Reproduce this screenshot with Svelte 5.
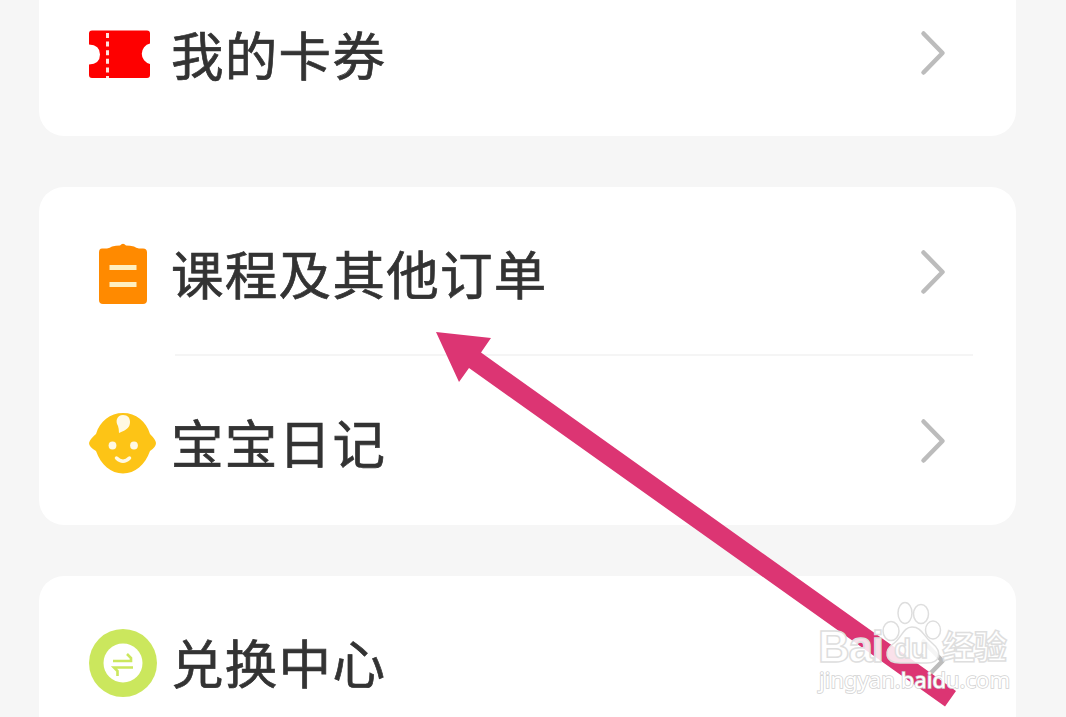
<script lang="ts">
  type IconName = 'ticket' | 'order' | 'baby' | 'exchange';

  interface Item {
    icon: IconName;
    label: string;
  }

  const groups: Item[][] = [
    [{ icon: 'ticket', label: '我的卡券' }],
    [
      { icon: 'order', label: '课程及其他订单' },
      { icon: 'baby', label: '宝宝日记' },
    ],
    [{ icon: 'exchange', label: '兑换中心' }],
  ];
</script>

{#snippet icon(name: IconName)}
  <svg class="icon" viewBox="0 0 68 68" aria-hidden="true">
    {#if name === 'ticket'}
      <path
        fill="#fe0000"
        d="M3 9.500H58Q61 9.500 61 12.500V22.500A10.500 10.500 0 0 0 61 43V54Q61 57 58 57H3Q0 57 0 54V43.500Q11 43 11 33.500T0 23.500V12.500Q0 9.500 3 9.500Z"
      />
      <path stroke="#ffe3df" stroke-width="3" stroke-dasharray="5 3.600" d="M18.500 12V57" />
    {:else if name === 'order'}
      <path
        fill="#ff8a00"
        d="M13 8.500H18Q21 8 23 6.500Q27 5.500 31 5.500Q34 2 37 5.500Q41 5.500 45 6.500Q47 8 50 8.500H54Q58 8.500 58 12.500V60Q58 64 54 64H14Q10 64 10 60V12.500Q10 8.500 13 8.500Z"
      />
      <path stroke="#ffefc0" stroke-width="5" d="M20.500 27.500H47.500M20.500 44.500H47.500" />
    {:else if name === 'baby'}
      <path
        fill="#fdc416"
        d="M34 4C47 4 57 12 61 25Q67 31 67 34Q67 38 61 42C56 56 46 64.500 34 64.500S12 56 7 42Q0 38 0 34Q1 30 7 25C11 12 21 4 34 4Z"
      />
      <path fill="#fff9e4" d="M34 6C39 6 41 9 41 13C41 18 38 21 30 24Q30 20 29 17C26 12 28 6 34 6Z" />
      <circle cx="23.500" cy="36.500" r="3.900" fill="#fff9e4" />
      <circle cx="45" cy="36.500" r="3.900" fill="#fff9e4" />
      <path
        fill="none"
        stroke="#fff9e4"
        stroke-width="3.500"
        stroke-linecap="round"
        d="M27.500 49Q34 55.500 40.500 49"
      />
    {:else}
      <circle cx="34" cy="34" r="34" fill="#cbe75d" />
      <circle cx="34" cy="34" r="19.500" fill="#fff" />
      <path
        fill="none"
        stroke="#cbe75d"
        stroke-width="2.600"
        d="M24 32H42V29L38 25M44 38.500H25L28.500 42V47"
      />
    {/if}
  </svg>
{/snippet}

<main class="page">
  {#each groups as group}
    <section class="card">
      {#each group as item}
        <a class="row" href="#{item.icon}">
          {@render icon(item.icon)}
          <span class="label">{item.label}</span>
          <svg class="chevron" viewBox="0 0 28 48" aria-hidden="true">
            <path d="M4.500 4.500L23.500 24L4.500 43.500" />
          </svg>
        </a>
      {/each}
    </section>
  {/each}

  <svg class="arrow" viewBox="0 0 1066 717" aria-hidden="true">
    <path d="M436 332L491 338L481 352.500L956 691L945 706.500L469 368L459 382Z" />
  </svg>

  <svg class="watermark" viewBox="0 0 200 100" aria-hidden="true">
    <g class="mark">
      <ellipse cx="79" cy="34" rx="8" ry="9.500" />
      <ellipse cx="93" cy="16" rx="7" ry="10.500" />
      <ellipse cx="109" cy="17" rx="7.500" ry="9.500" />
      <ellipse cx="121" cy="33" rx="7.500" ry="9" />
      <path d="M100 30C110 30 111 39 120 46C131 55 128 66 115 66H88C72 66 72 53 81 47C90 41 91 30 100 30Z" />
      <text class="brand" x="6" y="65" textLength="66">Bai</text>
      <text class="brand du" x="82" y="61" textLength="34">du</text>
      <text class="brand cn" x="130" y="62" textLength="65">经验</text>
    </g>
    <text class="url" x="7" y="91" textLength="191">jingyan.baidu.com</text>
  </svg>
</main>

<style>
  :global(body) {
    margin: 0;
    overflow: hidden;
    background: #f6f6f6;
  }

  .page {
    position: relative;
    box-sizing: border-box;
    height: 717px;
    padding: 0 50px 0 39px;
    overflow: hidden;
    background: #f6f6f6;
    font-family: 'Noto Sans CJK SC', sans-serif;
  }

  .card {
    margin-bottom: 51px;
    border-radius: 25px;
    background: #fff;
  }

  .card:first-child {
    margin-top: -32px;
  }

  .row {
    position: relative;
    display: flex;
    align-items: center;
    box-sizing: border-box;
    height: 168px;
    padding: 0 69px 0 50px;
    color: #333;
    text-decoration: none;
  }

  .row + .row {
    height: 170px;
  }

  /* Hairline starts at the label and stops short of the card edge. */
  .row + .row::before {
    content: '';
    position: absolute;
    top: -1px;
    right: 43px;
    left: 136px;
    height: 2px;
    background: #f5f5f5;
  }

  .icon {
    flex: none;
    width: 68px;
    height: 68px;
    margin-top: 5px;
  }

  .label {
    flex: 1;
    margin: 1px 0 0 14px;
    font-size: 52.5px;
    line-height: 76px;
    letter-spacing: 1.3px;
    -webkit-text-stroke: 0.7px #333;
  }

  .chevron {
    width: 28px;
    height: 48px;
    margin-top: 1px;
    fill: none;
    stroke: #bcbcbc;
    stroke-width: 4.5;
    stroke-linecap: round;
    stroke-linejoin: round;
  }

  .arrow {
    position: absolute;
    inset: 0;
    width: 1066px;
    height: 717px;
    fill: #dc3573;
    pointer-events: none;
  }

  .watermark {
    position: absolute;
    top: 597px;
    left: 812px;
    width: 200px;
    height: 100px;
    pointer-events: none;
  }

  .mark {
    fill: rgba(255, 255, 255, 0.85);
    stroke: #dedede;
    stroke-width: 1.5;
  }

  .brand {
    font: 700 44px 'Liberation Sans', sans-serif;
  }

  .du {
    font-size: 28px;
  }

  .cn {
    font: 700 33px 'Noto Sans CJK SC', sans-serif;
  }

  .url {
    fill: #fff;
    stroke: #d2d2d2;
    stroke-width: 1.6;
    paint-order: stroke;
    font: 22px 'Noto Sans', sans-serif;
  }
</style>
